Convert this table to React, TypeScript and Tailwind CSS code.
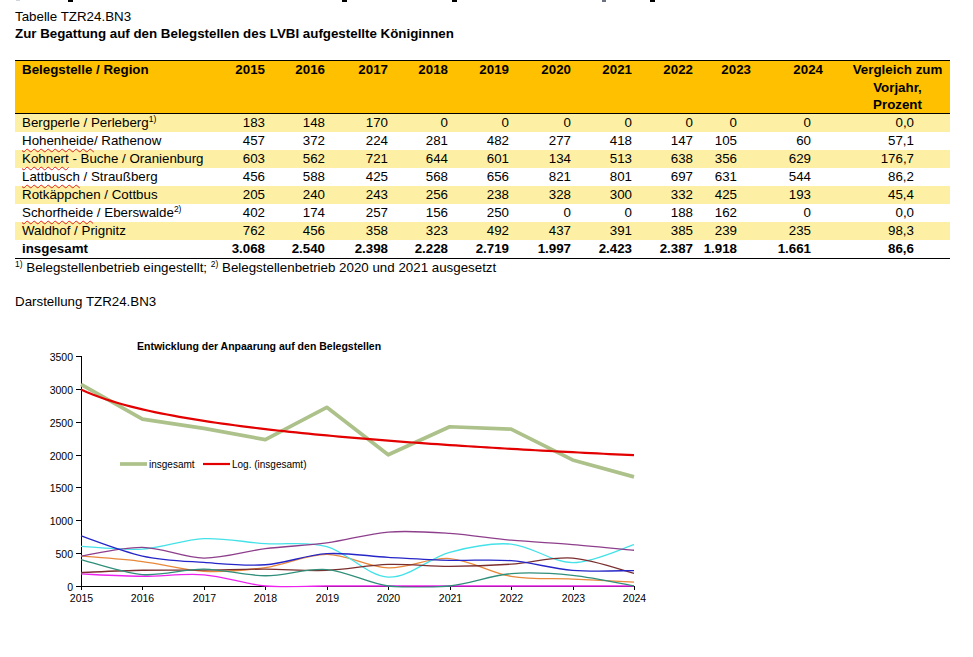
import React from "react";

const GRID =
  "grid grid-cols-[200px_50px_60px_63px_60px_61px_62px_61px_61px_58px_72px_127px]";

const valCls = [
  "text-right",
  "text-right",
  "text-right",
  "text-right",
  "text-right",
  "text-right",
  "text-right",
  "text-right",
  "text-right pr-[14px]",
  "text-right pr-[12px]",
];

type Row = {
  name: React.ReactNode;
  vals: string[];
  pct: string;
  yellow: boolean;
  bold?: boolean;
};

const Wavy = ({ children }: { children: React.ReactNode }) => (
  <span className="underline decoration-wavy decoration-[#e02020] decoration-1 underline-offset-[3px]">
    {children}
  </span>
);

const Sup = ({ children }: { children: React.ReactNode }) => (
  <span className="text-[8.5px] leading-none align-[5px]">{children}</span>
);

const rows: Row[] = [
  {
    name: (
      <>
        Bergperle / Perleberg<Sup>1)</Sup>
      </>
    ),
    vals: ["183", "148", "170", "0", "0", "0", "0", "0", "0", "0"],
    pct: "0,0",
    yellow: true,
  },
  {
    name: (
      <>
        <Wavy>Hohenheide</Wavy>/ Rathenow
      </>
    ),
    vals: ["457", "372", "224", "281", "482", "277", "418", "147", "105", "60"],
    pct: "57,1",
    yellow: false,
  },
  {
    name: (
      <>
        <Wavy>Kohnert</Wavy> - Buche / Oranienburg
      </>
    ),
    vals: ["603", "562", "721", "644", "601", "134", "513", "638", "356", "629"],
    pct: "176,7",
    yellow: true,
  },
  {
    name: (
      <>
        <Wavy>Lattbusch</Wavy> / Straußberg
      </>
    ),
    vals: ["456", "588", "425", "568", "656", "821", "801", "697", "631", "544"],
    pct: "86,2",
    yellow: false,
  },
  {
    name: <>Rotkäppchen / Cottbus</>,
    vals: ["205", "240", "243", "256", "238", "328", "300", "332", "425", "193"],
    pct: "45,4",
    yellow: true,
  },
  {
    name: (
      <>
        <Wavy>Schorfheide</Wavy> / Eberswalde<Sup>2)</Sup>
      </>
    ),
    vals: ["402", "174", "257", "156", "250", "0", "0", "188", "162", "0"],
    pct: "0,0",
    yellow: false,
  },
  {
    name: <>Waldhof / Prignitz</>,
    vals: ["762", "456", "358", "323", "492", "437", "391", "385", "239", "235"],
    pct: "98,3",
    yellow: true,
  },
  {
    name: <>insgesamt</>,
    vals: ["3.068", "2.540", "2.398", "2.228", "2.719", "1.997", "2.423", "2.387", "1.918", "1.661"],
    pct: "86,6",
    yellow: false,
    bold: true,
  },
];

const years = ["2015", "2016", "2017", "2018", "2019", "2020", "2021", "2022", "2023", "2024"];

const series: { color: string; data: number[] }[] = [
  { color: "#ee22ee", data: [183, 148, 170, 0, 0, 0, 0, 0, 0, 0] },
  { color: "#e8883a", data: [457, 372, 224, 281, 482, 277, 418, 147, 105, 60] },
  { color: "#44e2e8", data: [603, 562, 721, 644, 601, 134, 513, 638, 356, 629] },
  { color: "#8e3f8c", data: [456, 588, 425, 568, 656, 821, 801, 697, 631, 544] },
  { color: "#7b2e2e", data: [205, 240, 243, 256, 238, 328, 300, 332, 425, 193] },
  { color: "#2f8f7a", data: [402, 174, 257, 156, 250, 0, 0, 188, 162, 0] },
  { color: "#2626c8", data: [762, 456, 358, 323, 492, 437, 391, 385, 239, 235] },
];
const total = [3068, 2540, 2398, 2228, 2719, 1997, 2423, 2387, 1918, 1661];

const X0 = 81;
const X9 = 634;
const Y0 = 276;
const SCALE = 230 / 3500;
const xi = (i: number) => X0 + (i * (X9 - X0)) / 9;
const yv = (v: number) => Y0 - v * SCALE;

function smooth(data: number[]) {
  const p = data.map((v, i) => ({ x: xi(i), y: yv(v) }));
  let d = `M${p[0].x.toFixed(2)},${p[0].y.toFixed(2)}`;
  for (let i = 0; i < p.length - 1; i++) {
    const p0 = p[i - 1] || p[i];
    const p1 = p[i];
    const p2 = p[i + 1];
    const p3 = p[i + 2] || p2;
    const c1x = p1.x + (p2.x - p0.x) / 6;
    const c1y = p1.y + (p2.y - p0.y) / 6;
    const c2x = p2.x - (p3.x - p1.x) / 6;
    const c2y = p2.y - (p3.y - p1.y) / 6;
    d += ` C${c1x.toFixed(2)},${c1y.toFixed(2)} ${c2x.toFixed(2)},${c2y.toFixed(2)} ${p2.x.toFixed(2)},${p2.y.toFixed(2)}`;
  }
  return d;
}

function trend() {
  const pts: string[] = [];
  for (let t = 1; t <= 10.0001; t += 0.1) {
    const v = 2989 - 433.7 * Math.log(t);
    const x = X0 + ((t - 1) * (X9 - X0)) / 9;
    pts.push(`${x.toFixed(2)},${yv(v).toFixed(2)}`);
  }
  return pts.join(" ");
}

function Chart() {
  const font = "'Liberation Sans', Arial, sans-serif";
  return (
    <svg width="700" height="320" className="block" style={{ fontFamily: font }}>
      <defs>
        <clipPath id="plot">
          <rect x={X0 - 2} y={30} width={X9 - X0 + 6} height={Y0 - 30 + 1.5} />
        </clipPath>
      </defs>
      <text x={137} y={36} fontSize="10.5" fontWeight="bold" dominantBaseline="central" fill="#000">
        Entwicklung der Anpaarung auf den Belegstellen
      </text>
      <line x1={X0 + 0.5} y1={46} x2={X0 + 0.5} y2={Y0 + 0.5} stroke="#000" strokeWidth="1" />
      <line x1={X0} y1={Y0 + 0.5} x2={X9 + 1} y2={Y0 + 0.5} stroke="#000" strokeWidth="1" />
      {[0, 1, 2, 3, 4, 5, 6, 7].map((k) => {
        const y = Math.round(yv(k * 500)) + 0.5;
        return (
          <g key={k}>
            <line x1={X0 - 5} y1={y} x2={X0} y2={y} stroke="#000" strokeWidth="1" />
            <text x={73} y={y} fontSize="10.5" textAnchor="end" dominantBaseline="central" fill="#000">
              {k * 500}
            </text>
          </g>
        );
      })}
      {years.map((yr, i) => {
        const x = Math.round(xi(i)) + 0.5;
        return (
          <g key={yr}>
            <line x1={x} y1={Y0} x2={x} y2={Y0 + 4} stroke="#000" strokeWidth="1" />
            <text x={x} y={288} fontSize="10.5" textAnchor="middle" dominantBaseline="central" fill="#000">
              {yr}
            </text>
          </g>
        );
      })}
      <g clipPath="url(#plot)" fill="none">
        {series.map((s, i) => (
          <path key={i} d={smooth(s.data)} stroke={s.color} strokeWidth="1.3" />
        ))}
        <polyline
          points={total.map((v, i) => `${xi(i).toFixed(2)},${yv(v).toFixed(2)}`).join(" ")}
          stroke="#adc28a"
          strokeWidth="3.7"
          strokeLinejoin="round"
        />
        <polyline points={trend()} stroke="#e30000" strokeWidth="2.2" />
      </g>
      <line x1={120} y1={154} x2={147} y2={154} stroke="#adc28a" strokeWidth="3.7" />
      <text x={149} y={154} fontSize="10" dominantBaseline="central" fill="#000">
        insgesamt
      </text>
      <line x1={203} y1={154} x2={230} y2={154} stroke="#e30000" strokeWidth="2.2" />
      <text x={232} y={154} fontSize="10" dominantBaseline="central" fill="#000">
        Log. (insgesamt)
      </text>
    </svg>
  );
}

export default function App() {
  return (
    <div className="w-[973px] h-[657px] overflow-hidden bg-white text-black font-['Liberation_Sans',Arial,sans-serif] text-[13.33px]">
      <div className="flex h-[3px]">
        <span className="ml-[16px] w-[4px] h-[1px] bg-gray-300" />
        <span className="ml-[48px] w-[5px] h-[2px] bg-black" />
        <span className="ml-[269px] w-[5px] h-[2px] bg-black" />
        <span className="ml-[105px] w-[5px] h-[2px] bg-black" />
        <span className="ml-[145px] w-[4px] h-[2px] bg-gray-500" />
        <span className="ml-[44px] w-[5px] h-[2px] bg-black" />
      </div>
      <div className="pl-[15px] pt-[5px] leading-[17px]">
        <div>Tabelle TZR24.BN3</div>
        <div className="font-bold">Zur Begattung auf den Belegstellen des LVBI aufgestellte Königinnen</div>
      </div>
      <div className="ml-[15px] mt-[18px] w-[935px] border-t border-b border-black">
        <div className={`${GRID} h-[53px] bg-[#ffc000] border-b border-black font-bold leading-[17.5px]`}>
          <div className="pl-[7px]">Belegstelle / Region</div>
          {years.map((y) => (
            <div key={y} className="text-right">
              {y}
            </div>
          ))}
          <div className="pl-[22px] text-center">
            Vergleich zum
            <br />
            Vorjahr,
            <br />
            Prozent
          </div>
        </div>
        {rows.map((r, ri) => (
          <div
            key={ri}
            className={`${GRID} h-[18px] leading-[18px] ${r.yellow ? "bg-[#fdf0a5]" : "bg-white"} ${
              r.bold ? "font-bold" : ""
            }`}
          >
            <div className="pl-[7px] whitespace-nowrap">{r.name}</div>
            {r.vals.map((v, i) => (
              <div key={i} className={valCls[i]}>
                {v}
              </div>
            ))}
            <div className="text-right pr-[36px]">{r.pct}</div>
          </div>
        ))}
      </div>
      <div className="pl-[15px] leading-[17px]">
        <Sup>1)</Sup> Belegstellenbetrieb eingestellt; <Sup>2)</Sup> Belegstellenbetrieb 2020 und 2021 ausgesetzt
      </div>
      <div className="pl-[15px] mt-[17px] leading-[17px]">Darstellung TZR24.BN3</div>
      <Chart />
    </div>
  );
}
